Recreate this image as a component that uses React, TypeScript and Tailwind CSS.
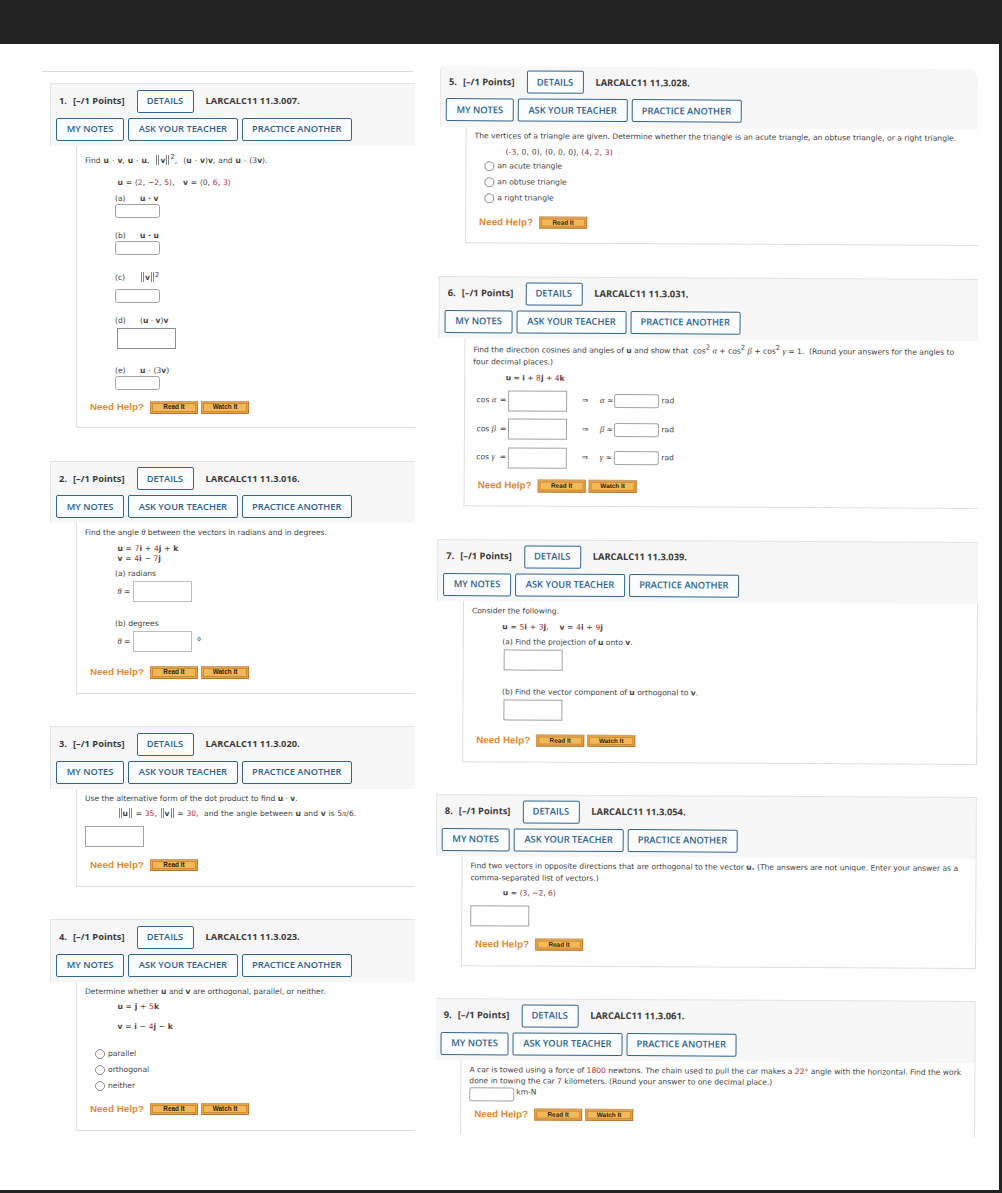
import type { ReactNode } from "react";

type Kids = { children?: ReactNode; className?: string };

const R = ({ children }: Kids) => <span className="text-[#b5292d]">{children}</span>;

const Sym = ({ children }: Kids) => (
  <i className="font-['Liberation_Serif',serif] text-[8.5px] leading-[8px] tracking-normal">{children}</i>
);

const Bars = () => (
  <span className="mx-[1px] my-[-3px] inline-block h-[10px] w-[3px] border-x-[0.8px] border-[#888] align-[1px]" />
);

const Norm = ({ children }: Kids) => (
  <>
    <Bars />
    <b>{children}</b>
    <Bars />
  </>
);

const Sup = ({ children }: Kids) => (
  <span className="relative -top-[3.5px] text-[6.8px] leading-[6px]">{children}</span>
);

/* One line of a problem: the height is the distance to the next line. */
const Row = ({ children, className = "" }: Kids) => (
  <div className={`flex items-start whitespace-pre leading-[10px] ${className}`}>{children}</div>
);

const SmallBox = ({ className = "" }: Kids) => (
  <span className={`block h-[14px] w-[44.5px] shrink-0 rounded-[2.5px] border border-[#a3a3a3] bg-white ${className}`} />
);

const BigBox = ({ className = "border-[#a3a3a3]" }: Kids) => (
  <span className={`block h-[21px] w-[58.5px] shrink-0 border bg-white ${className}`} />
);

const Radio = ({ children, className = "" }: Kids) => (
  <Row className={`pl-[9.5px] ${className}`}>
    <span className="mr-[3.5px] block size-[10px] shrink-0 rounded-full border border-[#8a8a8a]" />
    {children}
  </Row>
);

const HelpButton = ({ children }: Kids) => (
  <span className="flex h-[12.5px] w-[48px] items-center justify-center border border-t-[#c9a177] border-r-[#c47a2c] border-b-[#b97430] border-l-[#cf8f45] bg-[#e8a548] p-px">
    <span className="flex h-full w-full items-center justify-center border border-[#cf8a35] bg-[#f3b958] font-['Liberation_Sans',sans-serif] text-[6.4px] leading-none font-bold text-[#2c1c08]">
      {children}
    </span>
  </span>
);

const Help = ({ watch = false, className = "" }: { watch?: boolean; className?: string }) => (
  <div className={`flex items-start pl-[5px] ${className}`}>
    <span className="w-[60px] font-['Liberation_Sans',sans-serif] text-[9.8px] leading-[12px] font-bold whitespace-nowrap text-[#dd8b35]">
      Need Help?
    </span>
    <div className="flex gap-[3px]">
      <HelpButton>Read It</HelpButton>
      {watch && <HelpButton>Watch It</HelpButton>}
    </div>
  </div>
);

const Btn = ({ children, className = "" }: Kids) => (
  <button
    className={`flex h-[23px] items-center justify-center rounded-[2px] border-[1.5px] border-[#34658f] bg-[#fafcfd] text-[9.3px] font-semibold whitespace-nowrap text-[#2f6390] ${className}`}
  >
    {children}
  </button>
);

type ProblemProps = {
  n: number;
  code: string;
  children: ReactNode;
  className?: string;
  header?: string;
  body?: string;
};

const Problem = ({
  n,
  code,
  children,
  className = "",
  header = "h-[62.5px] border-t pt-[5.5px]",
  body = "border-b",
}: ProblemProps) => (
  <section className={className}>
    <header className={`border-l border-[#e4e4e4] bg-[#f7f7f7] pl-[5px] font-['Open_Sans',sans-serif] ${header}`}>
      <div className="flex items-center text-[9.3px] font-bold whitespace-nowrap text-[#3b3b3b]">
        <span className="ml-[3px] w-[14px]">{n}.</span>
        <span className="w-[63.5px]">[–/1 Points]</span>
        <Btn className="w-[57px]">DETAILS</Btn>
        <span className="ml-[12px]">{code}</span>
      </div>
      <div className="mt-[5px] flex gap-[4.25px]">
        <Btn className="w-[68px]">MY NOTES</Btn>
        <Btn className="w-[109.25px]">ASK YOUR TEACHER</Btn>
        <Btn className="w-[110px]">PRACTICE ANOTHER</Btn>
      </div>
    </header>
    <div className={`ml-[26px] border-l border-[#dedede] pl-[8px] ${body}`}>{children}</div>
  </section>
);

const Cosine = ({ sym, className }: { sym: string; className: string }) => (
  <div className={`flex items-start ${className}`}>
    <div className="flex h-[21px] items-center whitespace-pre">
      <span className="w-[27px] pl-[3.5px]">
        cos <Sym>{sym}</Sym>
      </span>
      <span className="w-[8px]">=</span>
      <BigBox />
      <span className="ml-[15.5px] w-[18px]">⇒</span>
      <span className="w-[14px]">
        <Sym>{sym}</Sym> ≈
      </span>
      <SmallBox />
      <span className="ml-[3px]">rad</span>
    </div>
  </div>
);

export default function App() {
  return (
    <div className="flex h-[1193px] w-[1002px] flex-col overflow-hidden bg-[#212121] font-['DejaVu_Sans',sans-serif] text-[7.58px] text-[#444]">
      <main className="mt-[44px] flex h-[1146px] w-[999px] items-start bg-white">
        <div className="ml-[42px] w-[373px] shrink-0 pt-[27px]">
          <div className="mr-[2px] h-px bg-[#dadada]" />
          <div className="ml-[8px] pt-[11px]">
            <Problem n={1} code="LARCALC11 11.3.007." header="h-[63px] border-t pt-[5.5px]" body="border-b pt-[9.5px]">
              <Row className="h-[22px] [word-spacing:0.6px]">
                <span>
                  Find <b>u</b> · <b>v</b>, <b>u</b> · <b>u</b>,  <Norm>v</Norm>
                  <Sup>2</Sup>,  (<b>u</b> · <b>v</b>)<b>v</b>, and <b>u</b> · (3<b>v</b>).
                </span>
              </Row>
              <Row className="h-[16.5px] pl-[32.5px] [word-spacing:0.4px]">
                <span>
                  <b>u</b> = ⟨<R>2</R>, <R>−2</R>, <R>5</R>⟩,   <b>v</b> = ⟨0, <R>6</R>, <R>3</R>⟩
                </span>
              </Row>
              <Row className="h-[9.5px] pl-[30px]">
                <span className="w-[25px]">(a)</span>
                <b>u · v</b>
              </Row>
              <Row className="h-[27px] pl-[30px]"><SmallBox /></Row>
              <Row className="h-[10.5px] pl-[30px]">
                <span className="w-[25px]">(b)</span>
                <b>u · u</b>
              </Row>
              <Row className="h-[32px] pl-[30px]"><SmallBox /></Row>
              <Row className="h-[15.5px] pl-[30px]">
                <span className="w-[25px]">(c)</span>
                <span>
                  <Norm>v</Norm>
                  <Sup>2</Sup>
                </span>
              </Row>
              <Row className="h-[27px] pl-[30px]"><SmallBox /></Row>
              <Row className="h-[12.5px] pl-[30px]">
                <span className="w-[25px]">(d)</span>
                <span>
                  (<b>u</b> · <b>v</b>)<b>v</b>
                </span>
              </Row>
              <Row className="h-[38px] pl-[32px]"><BigBox className="border-[#8f8f8f]" /></Row>
              <Row className="h-[10px] pl-[30px] [word-spacing:0.4px]">
                <span className="w-[25px]">(e)</span>
                <span>
                  <b>u</b> · (3<b>v</b>)
                </span>
              </Row>
              <Row className="h-[25px] pl-[30px]"><SmallBox /></Row>
              <Help watch className="h-[26px]" />
            </Problem>

            <Problem n={2} code="LARCALC11 11.3.016." className="mt-[32.5px]" body="border-b pt-[5px]">
              <Row className="h-[15.5px]">
                <span>
                  Find the angle <Sym>θ</Sym> between the vectors in radians and in degrees.
                </span>
              </Row>
              <Row className="h-[10px] pl-[32.5px] [word-spacing:0.3px]">
                <span>
                  <b>u</b> = <R>7</R><b>i</b> + <R>4</R><b>j</b> + <b>k</b>
                </span>
              </Row>
              <Row className="h-[15.5px] pl-[32.5px] [word-spacing:0.3px]">
                <span>
                  <b>v</b> = <R>4</R><b>i</b> − <R>7</R><b>j</b>
                </span>
              </Row>
              <Row className="h-[12px] pl-[30px]">(a) radians</Row>
              <Row className="h-[38px] items-start pl-[32.5px]">
                <span className="w-[15.5px] pt-[6px]">
                  <Sym>θ</Sym> =
                </span>
                <BigBox className="border-[#bdbdbd]" />
              </Row>
              <Row className="h-[12px] pl-[30px]">(b) degrees</Row>
              <Row className="h-[35px] pl-[32.5px]">
                <span className="w-[15.5px] pt-[6px]">
                  <Sym>θ</Sym> =
                </span>
                <BigBox className="border-[#bdbdbd]" />
                <span className="pt-[6px] pl-[5px] text-[10px]">°</span>
              </Row>
              <Help watch className="h-[26.5px]" />
            </Problem>

            <Problem n={3} code="LARCALC11 11.3.020." className="mt-[32.5px]" body="border-b pt-[5px]">
              <Row className="h-[15.5px]">
                <span>
                  Use the alternative form of the dot product to find <b>u</b> · <b>v</b>.
                </span>
              </Row>
              <Row className="h-[16.5px] pl-[32.5px] [word-spacing:0.35px]">
                <span>
                  <Norm>u</Norm> = <R>35</R>, <Norm>v</Norm> = <R>30</R>,  and the angle between <b>u</b> and <b>v</b> is 5<Sym>π</Sym>/6.
                </span>
              </Row>
              <Row className="h-[33px]"><BigBox /></Row>
              <Help className="h-[27px]" />
            </Problem>

            <Problem n={4} code="LARCALC11 11.3.023." className="mt-[32.5px]" body="border-b pt-[5px]">
              <Row className="h-[15.5px]">
                <span>
                  Determine whether <b>u</b> and <b>v</b> are orthogonal, parallel, or neither.
                </span>
              </Row>
              <Row className="h-[20px] pl-[32.5px] [word-spacing:0.3px]">
                <span>
                  <b>u</b> = <b>j</b> + <R>5</R><b>k</b>
                </span>
              </Row>
              <Row className="h-[26.5px] pl-[32.5px] [word-spacing:0.3px]">
                <span>
                  <b>v</b> = <b>i</b> − <R>4</R><b>j</b> − <b>k</b>
                </span>
              </Row>
              <Radio className="h-[16px]">parallel</Radio>
              <Radio className="h-[16px]">orthogonal</Radio>
              <Radio className="h-[22px]">neither</Radio>
              <Help watch className="h-[27px]" />
            </Problem>
          </div>
        </div>

        <div className="ml-[21px] h-[1146px] w-[542px] shrink-0 overflow-hidden pt-[21.5px] pl-[4px]">
          <div className="w-[540.5px] origin-top-left rotate-[0.32deg]">
            <Problem
              n={5}
              code="LARCALC11 11.3.028."
              header="mr-[2.5px] h-[60.5px] rounded-tl-[5px] rounded-tr-[10px] pt-[4px]"
              body="border-b pt-[4.5px]"
            >
              <Row className="h-[15.5px]">
                The vertices of a triangle are given. Determine whether the triangle is an acute triangle, an obtuse triangle, or a right triangle.
              </Row>
              <Row className="h-[14.5px] pl-[31px] tracking-[0.15px]">
                <span>
                  (<R>-3</R>, 0, 0), (0, 0, 0), (<R>4</R>, <R>2</R>, <R>3</R>)
                </span>
              </Row>
              <Radio className="h-[16px]">an acute triangle</Radio>
              <Radio className="h-[16px]">an obtuse triangle</Radio>
              <Radio className="h-[22.5px]">a right triangle</Radio>
              <Help className="h-[26.5px]" />
            </Problem>

            <Problem
              n={6}
              code="LARCALC11 11.3.031."
              className="mt-[32.5px]"
              header="h-[62px] border-t pt-[5px]"
              body="border-b pt-[7px]"
            >
              <Row className="h-[12.5px]">
                <span>
                  Find the direction cosines and angles of <b>u</b> and show that  cos<Sup>2</Sup> <Sym>α</Sym> + cos<Sup>2</Sup> <Sym>β</Sym> + cos<Sup>2</Sup> <Sym>γ</Sym> = 1.  (Round your answers for the angles to
                </span>
              </Row>
              <Row className="h-[15.5px]">four decimal places.)</Row>
              <Row className="h-[17px] pl-[32.5px]">
                <span>
                  <b>u</b> = <b>i</b> + <R>8</R><b>j</b> + <R>4</R><b>k</b>
                </span>
              </Row>
              <Cosine sym="α" className="h-[28.5px]" />
              <Cosine sym="β" className="h-[28.5px]" />
              <Cosine sym="γ" className="h-[32.5px]" />
              <Help watch className="h-[26px]" />
            </Problem>

            <Problem
              n={7}
              code="LARCALC11 11.3.039."
              className="mt-[32.5px]"
              header="h-[62px] border-t pt-[5px]"
              body="border-r border-b pt-[5.5px]"
            >
              <Row className="h-[15.5px]">Consider the following.</Row>
              <Row className="h-[15.5px] pl-[30.5px] [word-spacing:0.3px]">
                <span>
                  <b>u</b> = <R>5</R><b>i</b> + <R>3</R><b>j</b>,    <b>v</b> = <R>4</R><b>i</b> + <R>9</R><b>j</b>
                </span>
              </Row>
              <Row className="h-[12px] pl-[30.5px]">
                <span>
                  (a) Find the projection of <b>u</b> onto <b>v</b>.
                </span>
              </Row>
              <Row className="h-[37.5px] pl-[32px]"><BigBox /></Row>
              <Row className="h-[12.5px] pl-[30.5px]">
                <span>
                  (b) Find the vector component of <b>u</b> orthogonal to <b>v</b>.
                </span>
              </Row>
              <Row className="h-[34.5px] pl-[32px]"><BigBox /></Row>
              <Help watch className="h-[27px]" />
            </Problem>

            <Problem
              n={8}
              code="LARCALC11 11.3.054."
              className="mt-[32px]"
              header="h-[62px] border-t border-r pt-[5px]"
              body="border-r border-b pt-[5.5px]"
            >
              <Row className="h-[11.5px]">
                <span>
                  Find two vectors in opposite directions that are orthogonal to the vector <b>u.</b> (The answers are not unique. Enter your answer as a
                </span>
              </Row>
              <Row className="h-[15.5px]">comma-separated list of vectors.)</Row>
              <Row className="h-[16.5px] pl-[32.5px]">
                <span>
                  <b>u</b> = ⟨<R>3</R>, <R>−2</R>, <R>6</R>⟩
                </span>
              </Row>
              <Row className="h-[33px]"><BigBox /></Row>
              <Help className="h-[27px]" />
            </Problem>

            <Problem
              n={9}
              code="LARCALC11 11.3.061."
              className="mt-[32px]"
              header="h-[62px] border-t border-r pt-[5px]"
              body="border-r pt-[5px]"
            >
              <Row className="h-[11.5px]">
                <span>
                  A car is towed using a force of <R>1800</R> newtons. The chain used to pull the car makes a <R>22°</R> angle with the horizontal. Find the work
                </span>
              </Row>
              <Row className="h-[11px]">
                <span>
                  done in towing the car <R>7</R> kilometers. (Round your answer to one decimal place.)
                </span>
              </Row>
              <Row className="h-[20.5px]">
                <SmallBox />
                <span className="ml-[2.5px]">km-N</span>
              </Row>
              <Help watch className="h-[26px]" />
            </Problem>
          </div>
        </div>
      </main>
    </div>
  );
}
